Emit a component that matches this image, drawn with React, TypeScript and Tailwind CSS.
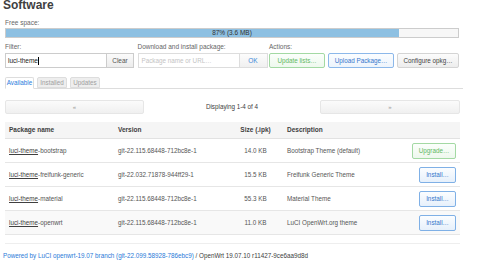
const font = { fontFamily: '"Liberation Sans", Arial, sans-serif' };

type Pkg = { name: string; version: string; size: string; desc: string; action: "upgrade" | "install" };

const packages: Pkg[] = [
  { name: "bootstrap", version: "git-22.115.68448-712bc8e-1", size: "14.0 KB", desc: "Bootstrap Theme (default)", action: "upgrade" },
  { name: "freifunk-generic", version: "git-22.032.71878-944ff29-1", size: "15.5 KB", desc: "Freifunk Generic Theme", action: "install" },
  { name: "material", version: "git-22.115.68448-712bc8e-1", size: "55.3 KB", desc: "Material Theme", action: "install" },
  { name: "openwrt", version: "git-22.115.68448-712bc8e-1", size: "11.0 KB", desc: "LuCI OpenWrt.org theme", action: "install" },
];

const cols = "grid grid-cols-[109px_114px_55px_117px_60px]";

export default function App() {
  return (
    <div className="w-[480px] h-[265px] overflow-hidden bg-white text-[#404040] text-[6.3px]" style={font}>
      <h2 className="pl-[3px] text-[12px] leading-[12px] -mt-px font-bold text-[#404040]">Software</h2>

      <div className="ml-[5px] w-[454px]">
        <div className="mt-[8px] leading-[8px] text-[6.5px] text-[#666]">Free space:</div>
        <div className="mt-[1px] h-[10px] border border-[#ccc] bg-[#f7f7f7] relative">
          <div className="h-full w-[87%] bg-[#8dc0e2]" />
          <div className="absolute inset-0 flex items-center justify-center text-[6.5px] text-[#333]">87% (3.6 MB)</div>
        </div>

        <div className="mt-[5px] flex">
          <div className="w-[133px]">
            <div className="leading-[8px] text-[6.5px] text-[#666]">Filter:</div>
            <div className="mt-[2px] flex h-[15px]">
              <div className="w-[102px] border border-[#ccc] bg-white flex items-center pl-[2px] text-[6.5px] text-[#222]">
                luci-theme<span className="w-px h-[8px] bg-black" />
              </div>
              <button className="w-[27px] border border-l-0 border-[#ccc] bg-gradient-to-b from-[#fbfbfb] to-[#ececec] text-[6.5px] text-[#555]">Clear</button>
            </div>
          </div>
          <div className="w-[132px]">
            <div className="leading-[8px] text-[6.5px] text-[#666]">Download and install package:</div>
            <div className="mt-[2px] flex h-[15px]">
              <div className="w-[102px] border border-[#ddd] bg-white flex items-center pl-[3px] text-[6.3px] text-[#c4c4c4]">Package name or URL…</div>
              <button className="w-[28px] border border-l-0 border-[#ddd] bg-gradient-to-b from-[#fcfcfc] to-[#f0f0f0] text-[6.5px] text-[#3d88d8]">OK</button>
            </div>
          </div>
          <div className="flex-1">
            <div className="leading-[8px] text-[6.5px] text-[#666]">Actions:</div>
            <div className="mt-[2px] flex gap-[2px] h-[15px]">
              <button className="w-[56px] rounded-[2px] border border-[#a3d9a3] bg-gradient-to-b from-[#fbfffb] to-[#eef8ee] text-[6.3px] text-[#62b862]">Update lists…</button>
              <button className="ml-px w-[66px] rounded-[2px] border border-[#8cb8ea] bg-gradient-to-b from-[#fbfdff] to-[#edf4fc] text-[6.3px] text-[#3576cc]">Upload Package…</button>
              <button className="ml-px w-[62px] rounded-[2px] border border-[#d4d4d4] bg-gradient-to-b from-[#fcfcfc] to-[#ededed] text-[6.3px] text-[#444]">Configure opkg…</button>
            </div>
          </div>
        </div>

        <div className="mt-[9px] w-[458px] flex gap-[3px] items-end h-[12px] border-b border-[#ddd]">
          <div className="w-[29px] h-[12px] -mb-px border border-[#ddd] border-b-white bg-white rounded-t-[2px] flex items-center justify-center text-[6.3px] text-[#2b7bdc]">Available</div>
          <div className="w-[30px] h-[11px] border border-[#ddd] bg-[#eeeeee] rounded-t-[2px] flex items-center justify-center text-[6.3px] text-[#a0a0a0]">Installed</div>
          <div className="w-[30px] h-[11px] border border-[#ddd] bg-[#eeeeee] rounded-t-[2px] flex items-center justify-center text-[6.3px] text-[#a0a0a0]">Updates</div>
        </div>

        <div className="mt-[11px] w-[455px] flex items-center h-[14px]">
          <div className="w-[139px] h-full rounded-[2px] border border-[#e6e6e6] bg-gradient-to-b from-[#fbfbfb] to-[#f0f0f0] flex items-center justify-center text-[6px] text-[#999]">«</div>
          <div className="flex-1 text-center text-[6.3px] text-[#404040]">Displaying 1-4 of 4</div>
          <div className="w-[140px] h-full rounded-[2px] border border-[#e6e6e6] bg-gradient-to-b from-[#fbfbfb] to-[#f0f0f0] flex items-center justify-center text-[6px] text-[#999]">»</div>
        </div>

        <div className="mt-[8px] w-[455px]">
          <div className={`${cols} h-[17px] items-center bg-[#f5f5f5] border-b border-[#e2e2e2] font-bold text-[6.5px] text-[#404040]`}>
            <div className="pl-[4px]">Package name</div>
            <div className="pl-[4px]">Version</div>
            <div className="text-center">Size (.ipk)</div>
            <div className="pl-[4px]">Description</div>
            <div />
          </div>
          {packages.map((p, i) => (
            <div
              key={p.name}
              className={`${cols} h-[24px] items-center border-b border-[#e6e6e6] text-[6.3px] text-[#555] ${i === 3 ? "bg-[#f9f9f9]" : "bg-white"}`}
            >
              <div className="pl-[4px]">
                <span className="underline text-[#404040]">luci-theme</span>-{p.name}
              </div>
              <div className="pl-[4px]">{p.version}</div>
              <div className="text-center">{p.size}</div>
              <div className="pl-[4px]">{p.desc}</div>
              <div className="flex justify-end pr-[4px]">
                {p.action === "upgrade" ? (
                  <button className="w-[44px] h-[16px] rounded-[2px] border border-[#a3d9a3] bg-gradient-to-b from-[#fbfffb] to-[#eef8ee] text-[6.3px] text-[#62b862]">Upgrade…</button>
                ) : (
                  <button className="w-[37px] h-[16px] rounded-[2px] border border-[#7fb0e6] bg-gradient-to-b from-[#fbfdff] to-[#e6f0fb] text-[6.3px] text-[#3576cc]">Install…</button>
                )}
              </div>
            </div>
          ))}
        </div>

        <div className="mt-[8px] w-[455px] border-t border-[#eee]" />
      </div>

      <div className="mt-[8px] pl-[3px] text-[6.3px] leading-[8px] whitespace-nowrap">
        <span className="text-[#2a7ad8]">Powered by LuCI openwrt-19.07 branch (git-22.099.58928-786ebc9)</span>
        <span className="text-[#404040]"> / OpenWrt 19.07.10 r11427-9ce6aa9d8d</span>
      </div>
    </div>
  );
}
